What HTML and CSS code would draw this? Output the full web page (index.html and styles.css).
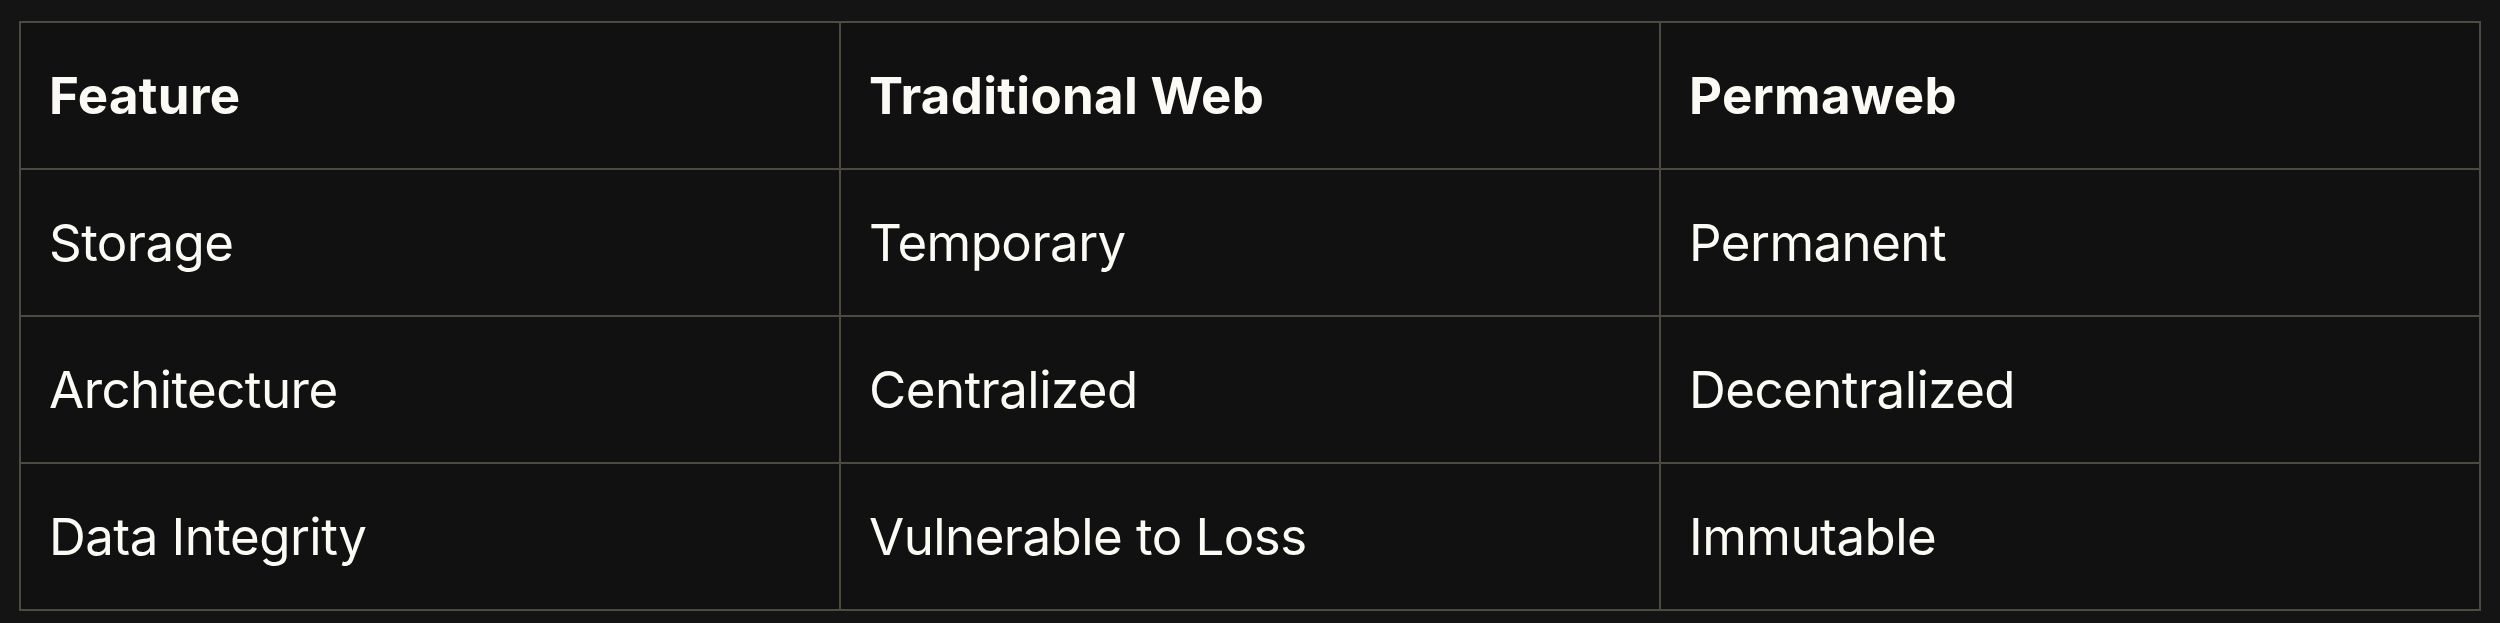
FILE: index.html
```html
<!DOCTYPE html>
<html lang="en">
<head>
<meta charset="utf-8">
<title>Comparison</title>
<link rel="stylesheet" href="styles.css">
</head>
<body>
<div class="wrap">
<table class="cmp">
  <thead>
    <tr><th>Feature</th><th>Traditional Web</th><th>Permaweb</th></tr>
  </thead>
  <tbody>
    <tr><td>Storage</td><td>Temporary</td><td>Permanent</td></tr>
    <tr><td>Architecture</td><td>Centralized</td><td>Decentralized</td></tr>
    <tr><td>Data Integrity</td><td>Vulnerable to Loss</td><td>Immutable</td></tr>
  </tbody>
</table>
</div>
</body>
</html>
```

FILE: styles.css
```css
html, body {
  margin: 0;
  padding: 0;
  background: #141414;
}
.wrap {
  padding: 21px 19px 0 19px;
}
.cmp {
  width: 100%;
  border-collapse: collapse;
  table-layout: fixed;
  background: #111111;
  font-family: Inter, "Noto Sans", sans-serif;
  font-size: 51px;
  color: #fbfaf4;
}
.cmp th,
.cmp td {
  border: 2px solid #4d4a42;
  padding: 34px 28px;
  line-height: 77px;
  text-align: left;
  vertical-align: middle;
}
.cmp th {
  font-weight: 700;
  letter-spacing: 0.3px;
}
.cmp td {
  font-weight: 400;
  letter-spacing: -0.55px;
}
```
